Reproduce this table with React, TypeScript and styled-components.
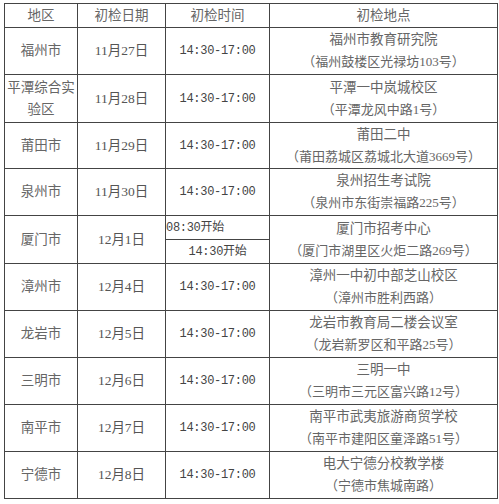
import React from "react";
import styled, { createGlobalStyle } from "styled-components";

const Global = createGlobalStyle`
  html, body { margin: 0; padding: 0; background: #fff; }
  body { font-family: "Liberation Serif", "Noto Sans CJK SC", serif; }
`;

const Page = styled.div`
  padding: 3px 0 0 4px;
`;

const Table = styled.table`
  border-collapse: collapse;
  table-layout: fixed;
  width: 489px;
  color: #666;
  font-size: 13px;
`;

const Th = styled.th<{ $w: number }>`
  width: ${(p) => p.$w}px;
  height: 23px;
  padding: 0;
  border: 1px solid #444;
  font-weight: normal;
  text-align: center;
  vertical-align: middle;
  font-size: 13.5px;
  line-height: 16px;
`;

const Td = styled.td<{ $h?: number }>`
  height: ${(p) => p.$h ?? 46}px;
  padding: 0;
  border: 1px solid #444;
  text-align: center;
  vertical-align: middle;
  line-height: 22px;
`;

const Region = styled(Td)`
  font-size: 13.5px;
  line-height: 22px;
`;

const DateCell = styled(Td)`
  font-size: 13.5px;
  color: #555;
`;

const Time = styled(Td)`
  font-family: "Liberation Mono", "Noto Sans CJK SC", monospace;
  font-size: 12px;
  letter-spacing: -0.3px;
  color: #444;
`;

const SplitTime = styled(Time)<{ $left?: boolean }>`
  text-align: ${(p) => (p.$left ? "left" : "center")};
  line-height: 16px;
`;

const Place = styled.div`
  font-size: 13.5px;
`;

const Addr = styled.div`
  font-size: 13px;
`;

type Row = {
  region: React.ReactNode;
  date: string;
  place: string;
  addr: string;
  h?: number;
};

const rows: Row[] = [
  { region: "福州市", date: "11月27日", place: "福州市教育研究院", addr: "（福州鼓楼区光禄坊103号）" },
  {
    region: (
      <>
        平潭综合实
        <br />
        验区
      </>
    ),
    date: "11月28日",
    place: "平潭一中岚城校区",
    addr: "（平潭龙风中路1号）",
    h: 47,
  },
  { region: "莆田市", date: "11月29日", place: "莆田二中", addr: "（莆田荔城区荔城北大道3669号）", h: 45 },
  { region: "泉州市", date: "11月30日", place: "泉州招生考试院", addr: "（泉州市东街崇福路225号）" },
];

const rowsAfter: Row[] = [
  { region: "漳州市", date: "12月4日", place: "漳州一中初中部芝山校区", addr: "（漳州市胜利西路）" },
  { region: "龙岩市", date: "12月5日", place: "龙岩市教育局二楼会议室", addr: "（龙岩新罗区和平路25号）" },
  { region: "三明市", date: "12月6日", place: "三明一中", addr: "（三明市三元区富兴路12号）" },
  { region: "南平市", date: "12月7日", place: "南平市武夷旅游商贸学校", addr: "（南平市建阳区童泽路51号）" },
  { region: "宁德市", date: "12月8日", place: "电大宁德分校教学楼", addr: "（宁德市焦城南路）" },
];

const Normal: React.FC<{ r: Row }> = ({ r }) => (
  <tr>
    <Region $h={r.h}>{r.region}</Region>
    <DateCell $h={r.h}>{r.date}</DateCell>
    <Time $h={r.h}>14:30-17:00</Time>
    <Td $h={r.h}>
      <Place>{r.place}</Place>
      <Addr>{r.addr}</Addr>
    </Td>
  </tr>
);

export default function App() {
  return (
    <Page>
      <Global />
      <Table>
        <thead>
          <tr>
            <Th $w={72}>地区</Th>
            <Th $w={87}>初检日期</Th>
            <Th $w={103}>初检时间</Th>
            <Th $w={227}>初检地点</Th>
          </tr>
        </thead>
        <tbody>
          {rows.map((r, i) => (
            <Normal key={i} r={r} />
          ))}
          <tr>
            <Region rowSpan={2} $h={23}>
              厦门市
            </Region>
            <DateCell rowSpan={2} $h={23}>
              12月1日
            </DateCell>
            <SplitTime $h={23} $left>
              08:30开始
            </SplitTime>
            <Td rowSpan={2} $h={23}>
              <Place>厦门市招考中心</Place>
              <Addr>（厦门市湖里区火炬二路269号）</Addr>
            </Td>
          </tr>
          <tr>
            <SplitTime $h={23}>14:30开始</SplitTime>
          </tr>
          {rowsAfter.map((r, i) => (
            <Normal key={i} r={r} />
          ))}
        </tbody>
      </Table>
    </Page>
  );
}
